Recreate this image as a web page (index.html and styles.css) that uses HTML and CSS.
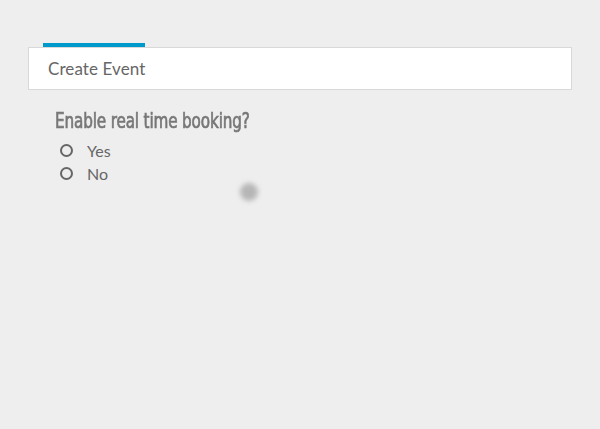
FILE: index.html
```html
<!DOCTYPE html>
<html>
<head>
<meta charset="utf-8">
<link rel="stylesheet" href="styles.css">
</head>
<body>
<div class="page">
  <div class="tab-indicator"></div>
  <div class="card">
    <span class="card-title">Create Event</span>
  </div>
  <div class="question">
    <h2 class="q-title">Enable real time booking?</h2>
    <label class="option"><span class="radio"></span><span class="opt-label">Yes</span></label>
    <label class="option"><span class="radio"></span><span class="opt-label">No</span></label>
  </div>
  <div class="cursor-dot"></div>
</div>
</body>
</html>
```
FILE: styles.css
```css
html, body {
  margin: 0;
  padding: 0;
  background: #eeeeee;
  width: 600px;
  height: 429px;
  overflow: hidden;
}
.page {
  position: relative;
  padding: 43px 28px 0 28px;
  font-family: "Lato", "Liberation Sans", sans-serif;
}
.tab-indicator {
  margin-left: 15px;
  width: 102px;
  height: 4px;
  background: #0099cc;
}
.card {
  box-sizing: border-box;
  height: 43px;
  background: #ffffff;
  border: 1px solid #d9d9d9;
  padding: 0 0 0 19px;
  display: flex;
  align-items: center;
}
.card-title {
  font-size: 17px;
  color: #666666;
  font-weight: 400;
  letter-spacing: 0.1px;
}
.question {
  padding: 18px 0 0 27px;
}
.q-title {
  margin: 0 0 6px 0;
  font-family: "DejaVu Sans Condensed", "DejaVu Sans", sans-serif;
  font-weight: 400;
  font-size: 22px;
  color: #777777;
  letter-spacing: -0.2px;
  line-height: 25px;
  transform: scaleX(0.77);
  transform-origin: left center;
  white-space: nowrap;
  -webkit-text-stroke: 0.7px #777777;
}
.option {
  display: flex;
  align-items: center;
  height: 23px;
  padding-left: 5px;
}
.radio {
  flex: none;
  box-sizing: border-box;
  width: 13px;
  height: 13px;
  border: 2px solid #666666;
  border-radius: 50%;
}
.opt-label {
  margin-left: 14px;
  font-size: 16px;
  font-weight: 400;
  color: #666666;
}
.cursor-dot {
  position: absolute;
  left: 240px;
  top: 183px;
  width: 18px;
  height: 18px;
  border-radius: 50%;
  background: #a8a8a8;
  filter: blur(2.5px);
  opacity: 0.8;
}
```
